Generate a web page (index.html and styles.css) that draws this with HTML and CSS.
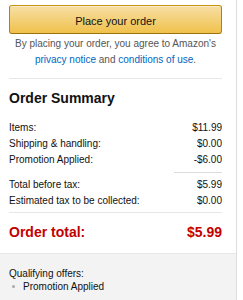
FILE: index.html
```html
<!DOCTYPE html>
<html>
<head>
<meta charset="utf-8">
<link rel="stylesheet" href="styles.css">
</head>
<body>
<div class="box">
  <div class="top">
    <button class="place-btn">Place your order</button>
    <p class="agree">By placing your order, you agree to Amazon's <a href="#">privacy notice</a> and <a href="#">conditions of use</a>.</p>
  </div>
  <div class="summary">
    <h3 class="title">Order Summary</h3>
    <div class="row"><span>Items:</span><span>$11.99</span></div>
    <div class="row"><span>Shipping &amp; handling:</span><span>$0.00</span></div>
    <div class="row"><span>Promotion Applied:</span><span>-$6.00</span></div>
    <div class="short-rule"></div>
    <div class="row"><span>Total before tax:</span><span>$5.99</span></div>
    <div class="row"><span>Estimated tax to be collected:</span><span>$0.00</span></div>
    <div class="total row"><span>Order total:</span><span>$5.99</span></div>
  </div>
  <div class="offers">
    <div class="offers-title">Qualifying offers:</div>
    <ul class="offers-list"><li>Promotion Applied</li></ul>
  </div>
</div>
</body>
</html>
```
FILE: styles.css
```css
html, body {
  margin: 0;
  padding: 0;
  background: #fff;
}
body {
  font-family: "Liberation Sans", Arial, sans-serif;
  color: #111;
  font-size: 10px;
}
.box {
  width: 237px;
  height: 300px;
  border-right: 1px solid #ddd;
  box-sizing: border-box;
  display: flex;
  flex-direction: column;
}
.top {
  margin: 0 14px 0 9px;
  padding-top: 5px;
  padding-bottom: 10px;
  border-bottom: 1px solid #e7e7e7;
}
.place-btn {
  display: block;
  width: 100%;
  height: 29px;
  margin: 0;
  padding: 2px 0 0;
  border: 1px solid;
  border-color: #c89411 #b0820f #99710d;
  border-radius: 3px;
  background: linear-gradient(to bottom, #f7dfa5, #f0c14b);
  box-shadow: inset 0 1px 0 rgba(255,255,255,0.4);
  font-family: "Liberation Sans", Arial, sans-serif;
  font-size: 11px;
  color: #111;
}
.agree {
  margin: 2px 0 0;
  text-align: center;
  line-height: 16px;
  color: #555;
  font-size: 10px;
}
.agree a {
  color: #0066c0;
  text-decoration: none;
}
.summary {
  margin: 0 14px 0 9px;
  padding-top: 9px;
  display: flex;
  flex-direction: column;
}
.title {
  margin: 0 0 12px;
  font-size: 14px;
  line-height: 20px;
  font-weight: bold;
  color: #111;
}
.row {
  display: flex;
  justify-content: space-between;
  line-height: 16px;
  font-size: 10px;
  color: #111;
}
.short-rule {
  width: 48px;
  align-self: flex-end;
  margin: 4px 0 4px;
  border-top: 1px solid #ddd;
}
.total {
  margin-top: 3px;
  padding-top: 9px;
  border-top: 1px solid #e7e7e7;
  font-size: 14px;
  line-height: 20px;
  font-weight: bold;
  color: #c40000;
}
.offers {
  flex: 1;
  margin-top: 11px;
  background: #f3f3f3;
  border-top: 1px solid #e7e7e7;
  padding: 14px 14px 0 9px;
  font-size: 10px;
  color: #111;
}
.offers-title {
  line-height: 12px;
}
.offers-list {
  margin: 0;
  padding: 0;
  list-style: none;
  line-height: 13px;
}
.offers-list li {
  display: flex;
  align-items: center;
  gap: 8px;
  padding-left: 3px;
}
.offers-list li::before {
  content: "";
  width: 3px;
  height: 3px;
  border-radius: 50%;
  background: #aaa;
}
```
